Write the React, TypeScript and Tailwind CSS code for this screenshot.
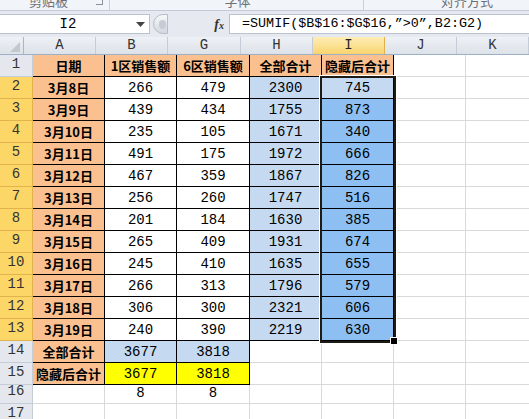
import React from 'react';

const mono = { fontFamily: '"Liberation Mono", "Noto Sans CJK SC", monospace' };
const cjk = { fontFamily: '"Noto Sans CJK SC", "Noto Sans", sans-serif' };

type Cell = { v?: string; bg?: string; bold?: boolean; line?: boolean };

const rows: [string, string, string, string, string][] = [
  ['3月8日', '266', '479', '2300', '745'],
  ['3月9日', '439', '434', '1755', '873'],
  ['3月10日', '235', '105', '1671', '340'],
  ['3月11日', '491', '175', '1972', '666'],
  ['3月12日', '467', '359', '1867', '826'],
  ['3月13日', '256', '260', '1747', '516'],
  ['3月14日', '201', '184', '1630', '385'],
  ['3月15日', '265', '409', '1931', '674'],
  ['3月16日', '245', '410', '1635', '655'],
  ['3月17日', '266', '313', '1796', '579'],
  ['3月18日', '306', '300', '2321', '606'],
  ['3月19日', '240', '390', '2219', '630'],
];

const orange = 'bg-[#fac090]';
const lightBlue = 'bg-[#c5d9f1]';
const selBlue = 'bg-[#8ebff2]';

function buildSheet(): { h: string; cells: Cell[]; sel?: boolean }[] {
  const out: { h: string; cells: Cell[]; sel?: boolean }[] = [];
  out.push({
    h: 'h-[22px]',
    cells: [
      { v: '日期', bg: orange, bold: true, line: true },
      { v: '1区销售额', bg: orange, bold: true, line: true },
      { v: '6区销售额', bg: orange, bold: true, line: true },
      { v: '全部合计', bg: orange, bold: true, line: true },
      { v: '隐藏后合计', bg: orange, bold: true, line: true },
      {},
      {},
    ],
  });
  rows.forEach((r, i) => {
    out.push({
      h: 'h-[22px]',
      sel: true,
      cells: [
        { v: r[0], bg: orange, bold: true, line: true },
        { v: r[1], bg: 'bg-white', line: true },
        { v: r[2], bg: 'bg-white', line: true },
        { v: r[3], bg: lightBlue, line: true },
        { v: r[4], bg: i === 0 ? lightBlue : selBlue, line: true },
        {},
        {},
      ],
    });
  });
  out.push({
    h: 'h-[22px]',
    cells: [
      { v: '全部合计', bg: orange, bold: true, line: true },
      { v: '3677', bg: lightBlue, line: true },
      { v: '3818', bg: lightBlue, line: true },
      {},
      {},
      {},
      {},
    ],
  });
  out.push({
    h: 'h-[22px]',
    cells: [
      { v: '隐藏后合计', bg: orange, bold: true, line: true },
      { v: '3677', bg: 'bg-[#ffff00]', line: true },
      { v: '3818', bg: 'bg-[#ffff00]', line: true },
      {},
      {},
      {},
      {},
    ],
  });
  out.push({ h: 'h-[19px]', cells: [{}, { v: '8' }, { v: '8' }, {}, {}, {}, {}] });
  out.push({ h: 'h-[22px]', cells: [{}, {}, {}, {}, {}, {}, {}] });
  return out;
}

const cols = ['A', 'B', 'G', 'H', 'I', 'J', 'K'];
const widths = ['w-[72px]', 'w-[72px]', 'w-[73px]', 'w-[72px]', 'w-[72px]', 'w-[72px]', 'w-[72px]'];

export default function App() {
  const sheet = buildSheet();

  return (
    <div className="w-[529px] h-[419px] overflow-hidden bg-white relative">
      {/* ribbon group labels, cut off */}
      <div className="h-[11px] bg-[#f1f4f8] border-b border-[#c3cad5] flex overflow-hidden text-[13px] text-[#6b6f76] leading-none" style={cjk}>
        <div className="w-[110px] border-r border-[#c9d0da] flex relative">
          <span className="ml-[29px] -mt-[6px]">剪贴板</span>
          <span className="absolute left-[96px] -top-[2px] w-[7px] h-[7px] border-r border-b border-[#8a919c]" />
        </div>
        <div className="w-[254px] border-r border-[#c9d0da] flex justify-center">
          <span className="-mt-[6px] ml-[2px]">字体</span>
        </div>
        <div className="flex-1 flex">
          <span className="ml-[77px] -mt-[6px]">对齐方式</span>
        </div>
      </div>

      {/* formula bar */}
      <div className="h-[26px] bg-[#e6eaf0] flex items-start pt-[3px]">
        <div className="w-[150px] h-[20px] bg-white border-y border-r border-[#b9c2cf] flex items-center">
          <div className="w-[136px] text-center text-[14px] text-black" style={mono}>I2</div>
          <svg width="9" height="5" viewBox="0 0 9 5" className="mt-[1px]">
            <path d="M0 0 H9 L4.5 5 Z" fill="#444" />
          </svg>
        </div>
        <div className="ml-[3px] w-[15px] h-[20px] rounded-l-full bg-gradient-to-b from-[#f7f8fa] to-[#d3d8df] border border-[#b6bdc8] flex items-center justify-center">
          <div className="w-[7px] h-[9px] rounded-full bg-[#c7ccd4] ml-[3px]" />
        </div>
        <div className="w-[61px] h-[20px] flex items-center justify-end pr-[5px]">
          <span className="italic font-bold text-[14px] text-[#333]" style={{ fontFamily: '"Liberation Serif", serif' }}>
            f<span className="text-[10px]">x</span>
          </span>
        </div>
        <div className="flex-1 h-[20px] bg-white border-y border-l border-[#b9c2cf] flex items-center pl-[12px] text-[13.4px] text-black whitespace-nowrap" style={mono}>
          =SUMIF($B$16:$G$16,”&gt;0”,B2:G2)
        </div>
      </div>

      {/* column headers */}
      <div className="flex h-[18px] border-b border-[#9eb0c6]">
        <div className="w-[33px] h-full bg-gradient-to-b from-[#eef1f5] to-[#dde2e9] border-r border-[#a9b6c6] relative">
          <svg width="10" height="10" viewBox="0 0 10 10" className="absolute right-[3px] bottom-[2px]">
            <path d="M10 0 V10 H0 Z" fill="#c2c8d0" />
          </svg>
        </div>
        {cols.map((c, i) => (
          <div
            key={c}
            className={`${widths[i]} shrink-0 h-full flex items-center justify-center text-[14px] border-r ${
              c === 'I'
                ? 'bg-gradient-to-b from-[#fdedb5] to-[#f9d46c] border-[#e2b14a] text-[#222]'
                : 'bg-gradient-to-b from-[#eef1f5] to-[#dde2e9] border-[#c3ccd7] text-[#333]'
            }`}
            style={mono}
          >
            {c}
          </div>
        ))}
      </div>

      {/* rows */}
      {sheet.map((row, ri) => (
        <div key={ri} className={`flex ${row.h}`}>
          <div
            className={`w-[33px] shrink-0 h-full flex items-end justify-center pb-[1px] text-[14px] border-r border-b ${
              row.sel
                ? 'bg-[#fcd767] border-[#e2b34c] text-[#333]'
                : 'bg-[#e4e8ee] border-[#c3ccd7] text-[#333]'
            }`}
            style={mono}
          >
            {ri + 1}
          </div>
          {row.cells.map((cell, ci) => (
            <div
              key={ci}
              className={`${widths[ci]} shrink-0 h-full flex items-end justify-center pb-[2px] border-r border-b leading-[16px] ${
                cell.line ? 'border-black' : 'border-[#d9d9d9]'
              } ${cell.bg ?? 'bg-white'} ${cell.bold ? 'font-bold text-[13px]' : 'text-[14px]'} text-black`}
              style={cell.bold ? cjk : mono}
            >
              {cell.v}
            </div>
          ))}
        </div>
      ))}

      {/* selection outline over I2:I13 */}
      <div className="absolute left-[320px] top-[76px] w-[76px] h-[267px] border-2 border-[#1e1a14] ring-1 ring-white pointer-events-none" />
      <div className="absolute left-[391px] top-[338px] w-[6px] h-[6px] bg-black ring-1 ring-white pointer-events-none" />
    </div>
  );
}
